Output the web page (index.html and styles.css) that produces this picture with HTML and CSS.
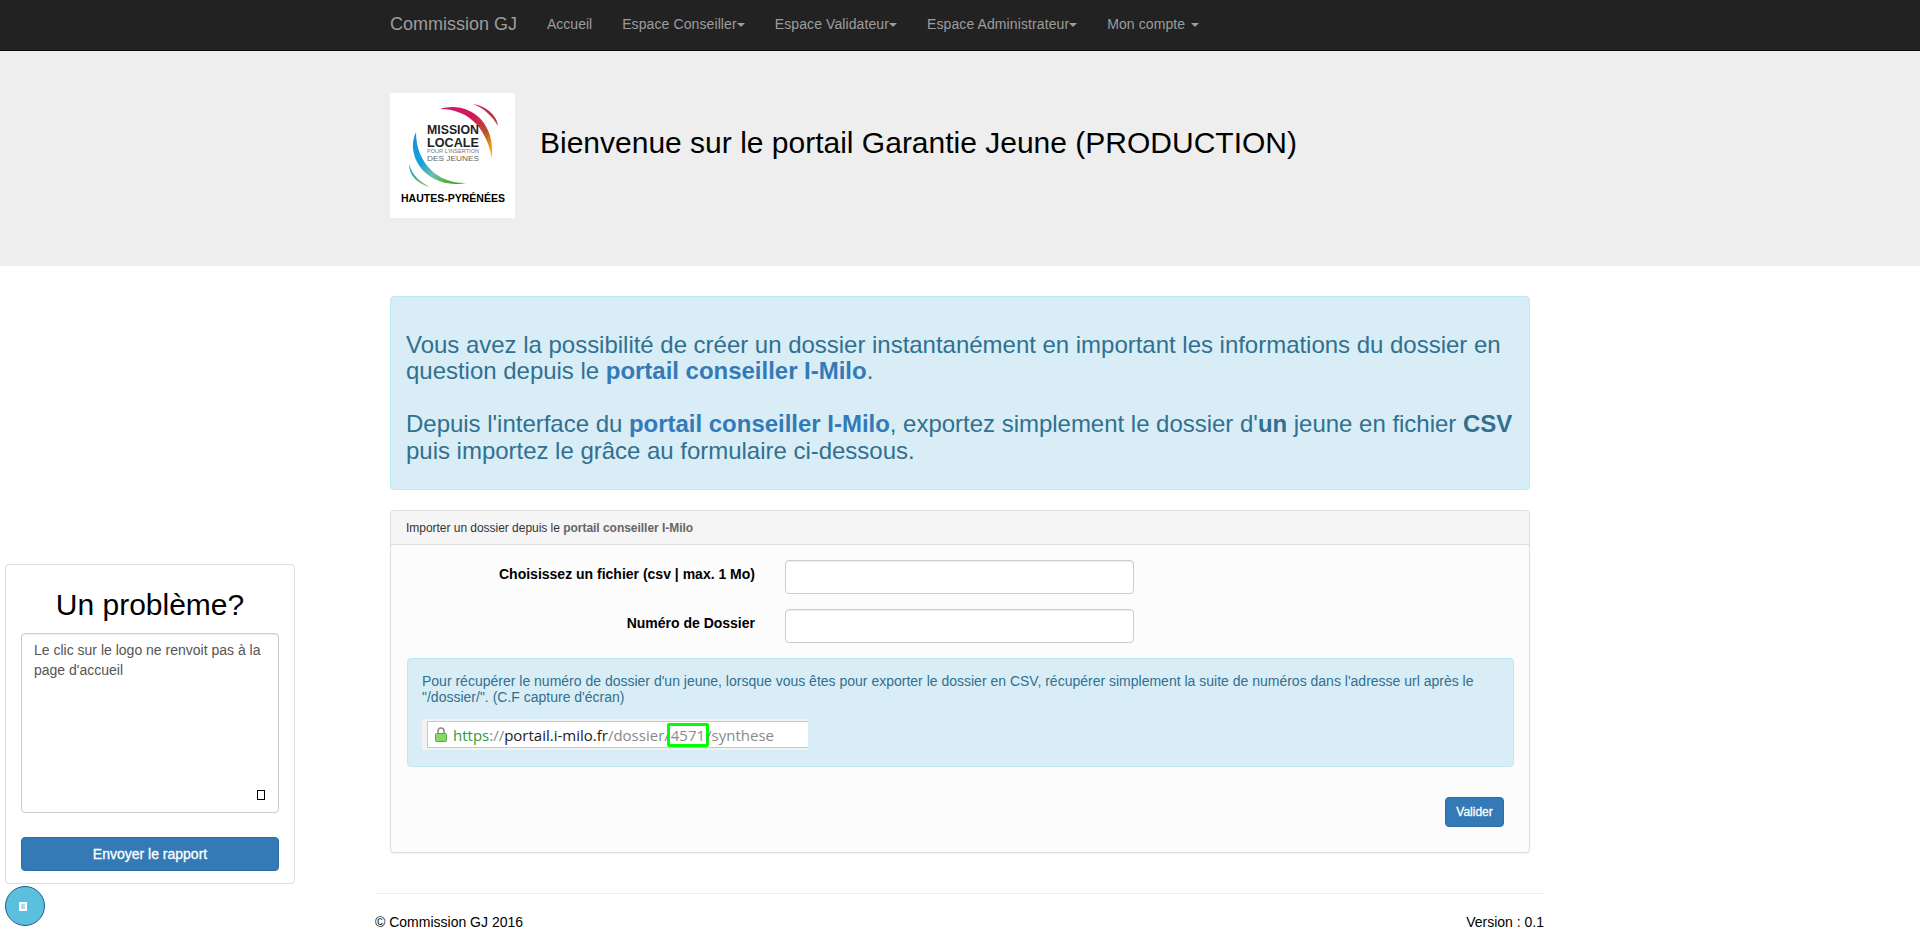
FILE: index.html
```html
<!DOCTYPE html>
<html lang="fr">
<head>
<meta charset="utf-8">
<title>Commission GJ</title>
<link rel="stylesheet" href="styles.css">
</head>
<body>
<nav class="navbar">
  <div class="container nav-inner">
    <a class="brand" href="#">Commission GJ</a>
    <a class="nav-link nav-plain" href="#">Accueil</a>
    <a class="nav-link" href="#">Espace Conseiller<span class="caret"></span></a>
    <a class="nav-link" href="#">Espace Validateur<span class="caret"></span></a>
    <a class="nav-link" href="#">Espace Administrateur<span class="caret"></span></a>
    <a class="nav-link" href="#">Mon compte <span class="caret caret-spaced"></span></a>
  </div>
</nav>

<header class="jumbotron">
  <div class="container jumbo-inner">
    <svg class="logo" viewBox="0 0 125 125" width="125" height="125" role="img" aria-label="Mission Locale Hautes-Pyrénées">
      <defs>
        <linearGradient id="arcTop" gradientUnits="userSpaceOnUse" x1="50" y1="15" x2="102" y2="65">
          <stop offset="0" stop-color="#d9166f"/>
          <stop offset="0.4" stop-color="#d4145a"/>
          <stop offset="0.7" stop-color="#b5562a"/>
          <stop offset="0.88" stop-color="#f0a010"/>
          <stop offset="1" stop-color="#f8d010"/>
        </linearGradient>
        <linearGradient id="arcThin" gradientUnits="userSpaceOnUse" x1="83" y1="11" x2="107" y2="32">
          <stop offset="0" stop-color="#d9166f"/>
          <stop offset="1" stop-color="#a8452e"/>
        </linearGradient>
        <linearGradient id="arcBottom" gradientUnits="userSpaceOnUse" x1="25" y1="40" x2="75" y2="90">
          <stop offset="0" stop-color="#1f8fd8"/>
          <stop offset="0.35" stop-color="#10a0dc"/>
          <stop offset="0.6" stop-color="#70c0b0"/>
          <stop offset="0.8" stop-color="#50b030"/>
          <stop offset="1" stop-color="#10a030"/>
        </linearGradient>
        <linearGradient id="arcBottomThin" gradientUnits="userSpaceOnUse" x1="19" y1="71" x2="39" y2="93">
          <stop offset="0" stop-color="#10a0dc"/>
          <stop offset="1" stop-color="#90c040"/>
        </linearGradient>
      </defs>
      <path fill="url(#arcTop)" d="M50 16 C74 8 106 24 102 66 C98 40 82 16 50 16Z"/>
      <path fill="url(#arcThin)" d="M83 11 C96 13 107 22 108 33 C103 24 94 15 83 11Z"/>
      <path fill="url(#arcBottom)" d="M26 39 C14 64 38 97 76 90 C50 91 26 72 26 39Z"/>
      <path fill="url(#arcBottomThin)" d="M19 71 C19 83 28 91 40 94 C30 89 22 82 19 71Z"/>
      <text class="logo-big" x="37" y="41" textLength="52" lengthAdjust="spacingAndGlyphs">MISSION</text>
      <text class="logo-big" x="37" y="54" textLength="52" lengthAdjust="spacingAndGlyphs">LOCALE</text>
      <text class="logo-tiny" x="37" y="60" textLength="52" lengthAdjust="spacingAndGlyphs">POUR L'INSERTION</text>
      <text class="logo-small" x="37" y="68" textLength="52" lengthAdjust="spacingAndGlyphs">DES JEUNES</text>
      <text class="logo-place" x="11" y="109" textLength="104" lengthAdjust="spacingAndGlyphs">HAUTES-PYRÉNÉES</text>
    </svg>
    <h1 class="title">Bienvenue sur le portail Garantie Jeune (PRODUCTION)</h1>
  </div>
</header>

<main class="container main">
  <section class="alert alert-lead">
    <h3 class="lead-text">Vous avez la possibilité de créer un dossier instantanément en important les informations du dossier en question depuis le <b class="link-strong">portail conseiller I-Milo</b>.<br><br>Depuis l'interface du <b class="link-strong">portail conseiller I-Milo</b>, exportez simplement le dossier d'<b>un</b> jeune en fichier <b>CSV</b> puis importez le grâce au formulaire ci-dessous.</h3>
  </section>

  <section class="panel">
    <div class="panel-heading">Importer un dossier depuis le <b>portail conseiller I-Milo</b></div>
    <form class="panel-body">
      <div class="form-row">
        <label class="form-label" for="fichier">Choisissez un fichier (csv | max. 1 Mo)</label>
        <input class="form-input" id="fichier" type="text">
      </div>
      <div class="form-row">
        <label class="form-label" for="numero">Numéro de Dossier</label>
        <input class="form-input" id="numero" type="text">
      </div>
      <div class="alert alert-help">
        <p class="help-text">Pour récupérer le numéro de dossier d'un jeune, lorsque vous êtes pour exporter le dossier en CSV, récupérer simplement la suite de numéros dans l'adresse url après le "/dossier/". (C.F capture d'écran)</p>
        <div class="urlbar">
          <div class="url-field">
            <svg class="lock" viewBox="0 0 12 15" width="12" height="15">
              <path d="M3 7V4a3 3 0 0 1 6 0V7" fill="none" stroke="#8a8a8a" stroke-width="1.5"/>
              <rect x="0.5" y="6.5" width="11" height="8" rx="1" fill="#86d86a" stroke="#5aa83f"/>
            </svg>
            <span class="url-text"><span class="u-green">https</span><span class="u-grey">://</span><span class="u-dark">portail.i-milo.fr</span><span class="u-grey">/dossier/</span><span class="u-mark">4571</span><span class="u-grey">/synthese</span></span>
          </div>
        </div>
      </div>
      <div class="form-actions"><button class="btn btn-small" type="button">Valider</button></div>
    </form>
  </section>

  <footer class="footer">
    <span>© Commission GJ 2016</span>
    <span>Version : 0.1</span>
  </footer>
</main>

<aside class="report">
  <h2 class="report-title">Un problème?</h2>
  <div class="report-field">
    <textarea class="report-text">Le clic sur le logo ne renvoit pas à la page d'accueil</textarea>
    <span class="resize-mark"></span>
  </div>
  <button class="btn btn-block" type="button">Envoyer le rapport</button>
</aside>
<button class="report-toggle" type="button" aria-label="Signaler un problème"><span class="toggle-mark"></span></button>
</body>
</html>
```
FILE: styles.css
```css
* { box-sizing: border-box; }
html, body { margin: 0; padding: 0; }
body {
  font-family: "Liberation Sans", Arial, sans-serif;
  font-size: 14px;
  line-height: 20px;
  color: #000;
  background: #fff;
}
.container { width: 1170px; margin: 0 auto; padding: 0 15px; }

/* Navbar */
.navbar { height: 51px; background: #222; border-bottom: 1px solid #080808; }
.nav-inner { display: flex; align-items: center; height: 48px; }
.brand { color: #9d9d9d; font-size: 18px; text-decoration: none; padding-right: 15px; }
.nav-link { color: #9d9d9d; font-size: 14px; letter-spacing: 0.1px; text-decoration: none; padding: 0 15px; }
.nav-plain { letter-spacing: 0; }
.caret {
  display: inline-block;
  width: 0; height: 0;
  vertical-align: middle;
  border-top: 4px solid #9d9d9d;
  border-left: 4px solid transparent;
  border-right: 4px solid transparent;
}
.caret-spaced { margin-left: 2px; }

/* Jumbotron */
.jumbotron { background: #eee; height: 215px; padding-top: 42px; }
.jumbo-inner { display: flex; align-items: flex-start; gap: 25px; }
.logo { background: #fff; display: block; flex: none; }
.logo text { font-family: "Liberation Sans", Arial, sans-serif; }
.logo-big { font-size: 13px; font-weight: 700; fill: #222; }
.logo-tiny { font-size: 5px; fill: #777; }
.logo-small { font-size: 8px; fill: #666; }
.logo-place { font-size: 10px; font-weight: 700; fill: #000; }
.title { margin: 33px 0 0; font-size: 30px; line-height: 33px; font-weight: 400; color: #000; }

/* Main */
.main { padding-top: 30px; }
.alert { border: 1px solid #bce8f1; border-radius: 4px; background: #d9edf7; color: #31708f; }
.alert-lead { padding: 15px; margin-bottom: 20px; height: 194px; }
.lead-text { margin: 20px 0 10px; font-size: 24px; line-height: 26.4px; font-weight: 400; letter-spacing: -0.02px; }
.link-strong { color: #337ab7; }

.panel { border: 1px solid #ddd; border-radius: 4px; background: #fcfcfc; height: 343px; box-shadow: 0 1px 1px rgba(0,0,0,.05); }
.panel-heading {
  height: 34px;
  padding: 7px 15px;
  font-size: 12px;
  letter-spacing: -0.03px;
  color: #333;
  background: #f5f5f5;
  border-bottom: 1px solid #ddd;
  border-radius: 3px 3px 0 0;
}
.panel-heading b { color: #666; }
.panel-body { padding: 15px; }
.form-row { display: grid; grid-template-columns: 349px 349px; column-gap: 30px; margin-bottom: 15px; }
.form-label { text-align: right; font-weight: 700; padding-top: 4px; font-size: 14px; }
.form-input {
  height: 34px;
  width: 349px;
  border: 1px solid #ccc;
  border-radius: 4px;
  background: #fff;
  box-shadow: inset 0 1px 1px rgba(0,0,0,.075);
}
.alert-help { height: 109px; padding: 14px 14px 0; margin: 0 0 30px 1px; }
.help-text { margin: 0; font-size: 14px; line-height: 16px; }
.urlbar {
  width: 386px;
  height: 31px;
  margin-top: 14px;
  padding: 2px 0 2px 5px;
  background: #f2f2f2;
}
.url-field {
  display: flex;
  align-items: center;
  gap: 6px;
  height: 27px;
  padding-left: 7px;
  background: #fff;
  border: 1px solid #c8c8c8;
  border-right: 0;
}
.lock { flex: none; }
.url-text { font-family: "Open Sans", sans-serif; font-size: 15px; white-space: nowrap; color: #888; }
.u-green { color: #2d9a3c; }
.u-grey { color: #8a8a8a; }
.u-dark { color: #222; }
.u-mark {
  display: inline-block;
  color: #8a8a8a;
  line-height: 18px;
  border: 3px solid #0f0;
  border-radius: 2px;
  margin: 0 -3px;
  padding: 0 1px;
}
.form-actions { display: flex; justify-content: flex-end; padding-right: 10px; }
.btn {
  font-family: inherit;
  color: #fff;
  background: #337ab7;
  border: 1px solid #2e6da4;
  border-radius: 4px;
  cursor: pointer;
  -webkit-text-stroke: 0.3px #fff;
}
.btn-small { width: 59px; height: 30px; padding: 0; font-size: 12px; }

.footer {
  display: flex;
  justify-content: space-between;
  margin: 40px -15px 0;
  padding: 18px 1px 0 0;
  border-top: 1px solid #eee;
  font-size: 14px;
}

/* Floating report widget */
.report {
  position: fixed;
  left: 5px;
  top: 564px;
  width: 290px;
  height: 320px;
  padding: 0 15px;
  background: #fff;
  border: 1px solid #ddd;
  border-radius: 4px;
}
.report-title { margin: 23px 0 0; height: 45px; text-align: center; font-size: 30px; line-height: 33px; font-weight: 400; }
.report-field { position: relative; height: 180px; margin-bottom: 24px; }
.report-text {
  display: block;
  width: 100%;
  height: 180px;
  padding: 6px 12px;
  font-family: inherit;
  font-size: 14px;
  line-height: 20px;
  color: #555;
  border: 1px solid #ccc;
  border-radius: 4px;
  resize: none;
  outline: 0;
  box-shadow: inset 0 1px 1px rgba(0,0,0,.075);
}
.resize-mark {
  position: absolute;
  right: 14px;
  bottom: 13px;
  width: 8px;
  height: 10px;
  border: 1.5px solid #000;
  background: #fff;
}
.btn-block { display: block; width: 100%; height: 34px; font-size: 14px; }
.report-toggle {
  position: fixed;
  left: 5px;
  top: 886px;
  width: 40px;
  height: 40px;
  padding: 0;
  display: flex;
  align-items: center;
  justify-content: center;
  background: #5bc0de;
  border: 1px solid #1f5f85;
  border-radius: 50%;
}
.toggle-mark { width: 8px; height: 9px; margin-right: 4px; border: 2px solid #fff; background: #a8e0f0; }
```
